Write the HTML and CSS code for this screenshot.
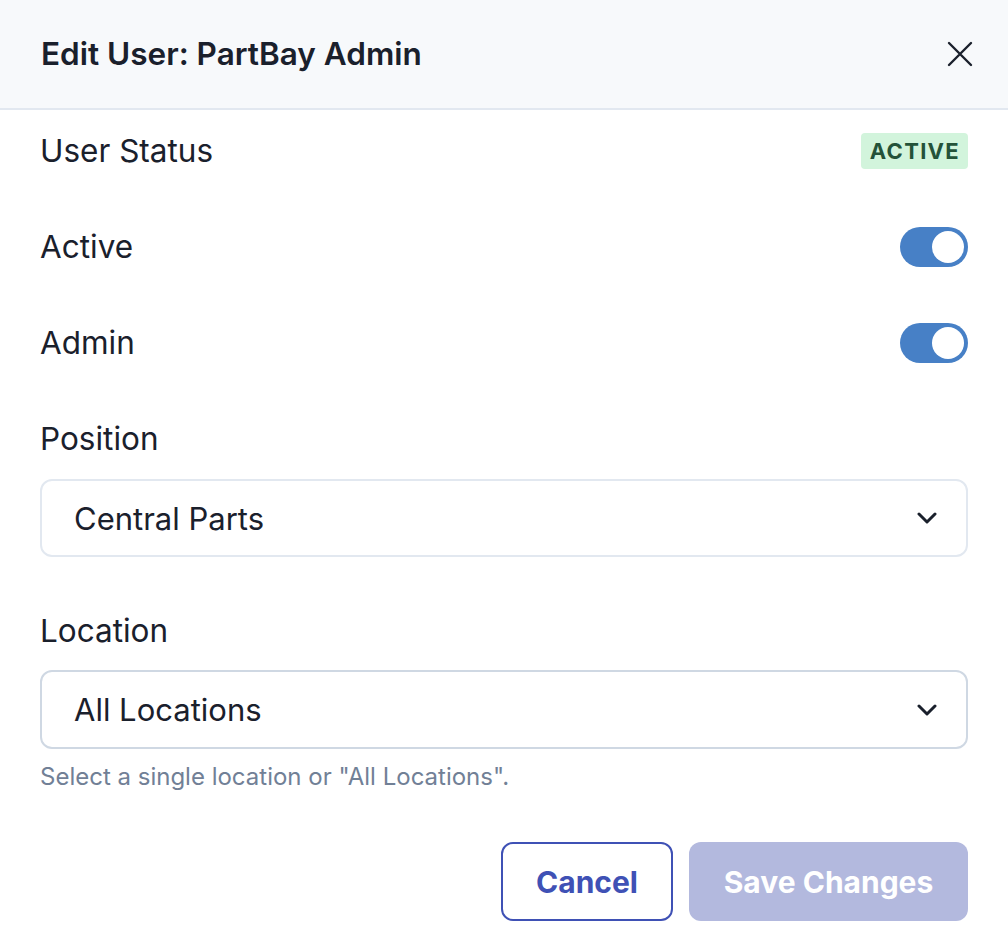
FILE: index.html
```html
<!DOCTYPE html>
<html lang="en">
<head>
  <meta charset="UTF-8" />
  <title>Edit User</title>
  <link rel="stylesheet" href="styles.css">
</head>
<body>

  <div class="modal">
    <!-- Header -->
    <div class="modal-header">
      <h1>Edit User: PartBay Admin</h1>
      <button class="close-btn" aria-label="Close">
        <svg width="26" height="26" viewBox="0 0 26 26">
          <path d="M2 2 L24 24 M24 2 L2 24" stroke="#1a202c" stroke-width="2.4" stroke-linecap="round" fill="none" />
        </svg>
      </button>
    </div>

    <!-- Body -->
    <div class="modal-body">
      <div class="row status-row">
        <span class="row-label">User Status</span>
        <span class="badge">ACTIVE</span>
      </div>

      <div class="row">
        <span class="row-label">Active</span>
        <span class="toggle on"><span class="knob"></span></span>
      </div>

      <div class="row">
        <span class="row-label">Admin</span>
        <span class="toggle on"><span class="knob"></span></span>
      </div>

      <div class="field">
        <label class="field-label">Position</label>
        <div class="select">
          <span>Central Parts</span>
          <svg class="chevron" width="20" height="12" viewBox="0 0 20 12">
            <path d="M2 2 L10 10 L18 2" stroke="#1a202c" stroke-width="3" fill="none" stroke-linecap="round" stroke-linejoin="round" />
          </svg>
        </div>
      </div>

      <div class="field">
        <label class="field-label">Location</label>
        <div class="select focused">
          <span>All Locations</span>
          <svg class="chevron" width="20" height="12" viewBox="0 0 20 12">
            <path d="M2 2 L10 10 L18 2" stroke="#1a202c" stroke-width="3" fill="none" stroke-linecap="round" stroke-linejoin="round" />
          </svg>
        </div>
        <p class="help">Select a single location or "All Locations".</p>
      </div>

      <div class="actions">
        <button class="btn btn-outline">Cancel</button>
        <button class="btn btn-primary" disabled>Save Changes</button>
      </div>
    </div>
  </div>

</body>
</html>
```

FILE: styles.css
```css
/* Basic page styling */
* {
  box-sizing: border-box;
  margin: 0;
  padding: 0;
}
body {
  font-family: Inter, "Noto Sans", sans-serif;
  background: #fff;
  color: #1a202c;
}

/* ============================================================
   Header
   ============================================================ */
.modal-header {
  height: 110px;
  background: #f7f9fb;
  border-bottom: 2px solid #e2e8f0;
  display: flex;
  align-items: center;
  justify-content: space-between;
  padding: 0 35px 0 41px;
}
.modal-header h1 {
  font-size: 31.5px;
  font-weight: 600;
  line-height: 38px;
}
.close-btn {
  background: none;
  border: none;
  display: flex;
  padding: 0;
  cursor: pointer;
}

/* ============================================================
   Body
   ============================================================ */
.modal-body {
  padding: 0 40px 0 40px;
}
.row {
  display: flex;
  align-items: center;
  justify-content: space-between;
  height: 96px;
}
.status-row {
  height: 82px;
  margin-bottom: 7px;
}
.row-label {
  font-size: 31.5px;
  font-weight: 400;
  line-height: 38px;
}
.badge {
  background: #d2f4dc;
  color: #245239;
  font-size: 22px;
  font-weight: 700;
  line-height: 26px;
  letter-spacing: 1.3px;
  padding: 5px 8px 5px 9px;
  border-radius: 4px;
}

/* Toggle switch */
.toggle {
  width: 68px;
  height: 40px;
  border-radius: 20px;
  background: #4780c6;
  display: flex;
  align-items: center;
  padding: 4px;
}
.toggle.on {
  justify-content: flex-end;
}
.knob {
  width: 32px;
  height: 32px;
  border-radius: 50%;
  background: #fff;
}

/* Fields */
.field {
  padding-top: 29px;
}
.field + .field {
  padding-top: 55px;
}
.field-label {
  display: block;
  font-size: 31.5px;
  font-weight: 400;
  line-height: 38px;
  margin-bottom: 21px;
}
.field + .field .field-label {
  margin-bottom: 20px;
}
.select {
  height: 78px;
  border: 2px solid #e2e8f0;
  border-radius: 12px;
  display: flex;
  align-items: center;
  justify-content: space-between;
  padding: 0 29px 0 32px;
  font-size: 31px;
}
.select.focused {
  height: 79px;
  border-color: #cfd8e3;
}
.help {
  font-size: 24px;
  line-height: 28px;
  color: #718096;
  margin-top: 14px;
}

/* ============================================================
   Actions
   ============================================================ */
.actions {
  display: flex;
  justify-content: flex-end;
  gap: 16px;
  margin-top: 51px;
}
.btn {
  height: 79px;
  border-radius: 12px;
  font-family: Inter, "Noto Sans", sans-serif;
  font-size: 30px;
  font-weight: 700;
  padding: 0;
  cursor: pointer;
}
.btn-outline {
  background: #fff;
  border: 2px solid #3f51b5;
  color: #3f51b5;
  width: 172px;
}
.btn-primary {
  background: #b3b9de;
  border: none;
  color: #fff;
  width: 279px;
}
```
